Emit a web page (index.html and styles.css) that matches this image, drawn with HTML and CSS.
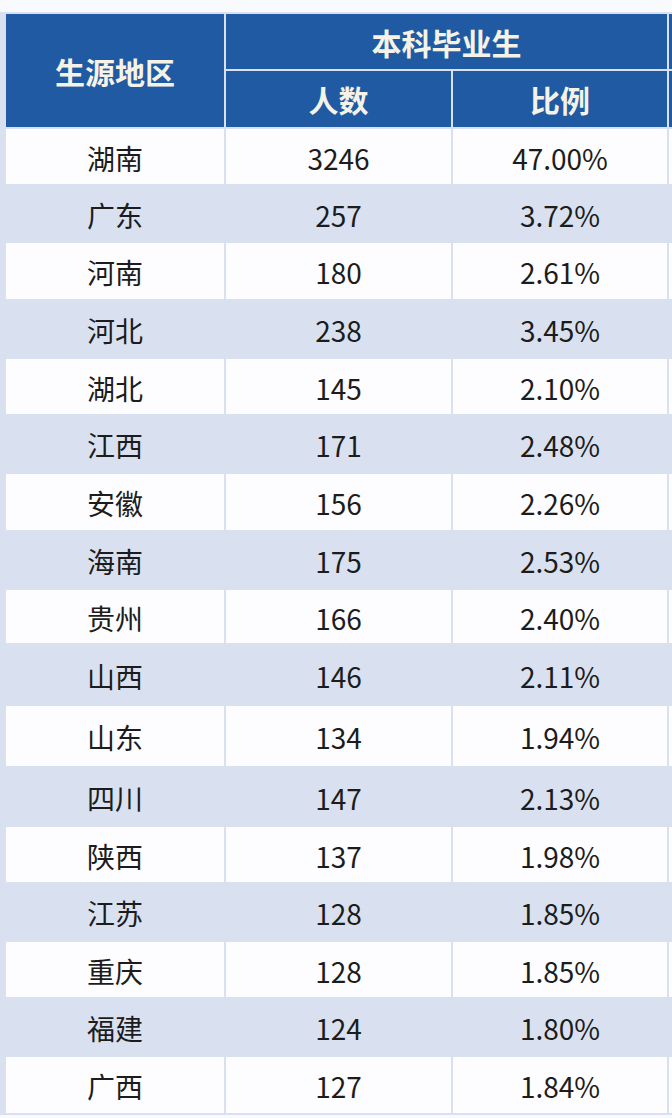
FILE: index.html
```html
<!DOCTYPE html>
<html lang="zh-CN">
<head>
<meta charset="utf-8">
<title>生源地区</title>
<link rel="stylesheet" href="styles.css">
</head>
<body>
<div class="wrap">
  <div class="table">
    <div class="th span-rows">生源地区</div>
    <div class="th span-cols">本科毕业生</div>
    <div class="th"></div>
    <div class="th">人数</div>
    <div class="th">比例</div>
    <div class="th"></div>

    <div class="row"><div>湖南</div><div>3246</div><div>47.00%</div><div></div></div>
    <div class="row alt"><div>广东</div><div>257</div><div>3.72%</div><div></div></div>
    <div class="row"><div>河南</div><div>180</div><div>2.61%</div><div></div></div>
    <div class="row alt"><div>河北</div><div>238</div><div>3.45%</div><div></div></div>
    <div class="row"><div>湖北</div><div>145</div><div>2.10%</div><div></div></div>
    <div class="row alt"><div>江西</div><div>171</div><div>2.48%</div><div></div></div>
    <div class="row"><div>安徽</div><div>156</div><div>2.26%</div><div></div></div>
    <div class="row alt"><div>海南</div><div>175</div><div>2.53%</div><div></div></div>
    <div class="row"><div>贵州</div><div>166</div><div>2.40%</div><div></div></div>
    <div class="row alt"><div>山西</div><div>146</div><div>2.11%</div><div></div></div>
    <div class="row"><div>山东</div><div>134</div><div>1.94%</div><div></div></div>
    <div class="row alt"><div>四川</div><div>147</div><div>2.13%</div><div></div></div>
    <div class="row"><div>陕西</div><div>137</div><div>1.98%</div><div></div></div>
    <div class="row alt"><div>江苏</div><div>128</div><div>1.85%</div><div></div></div>
    <div class="row"><div>重庆</div><div>128</div><div>1.85%</div><div></div></div>
    <div class="row alt"><div>福建</div><div>124</div><div>1.80%</div><div></div></div>
    <div class="row"><div>广西</div><div>127</div><div>1.84%</div><div></div></div>
  </div>
</div>
</body>
</html>
```

FILE: styles.css
```css
html, body {
  margin: 0;
  padding: 0;
  overflow: hidden;
  background: #f9fafd;
}

body {
  width: 672px;
  height: 1118px;
  font-family: "Noto Sans CJK SC", "Noto Sans", sans-serif;
}

.wrap {
  margin-top: 12px;
  padding: 2px 0 2px 6px;
  background: #d9e1f1;
  width: 672px;
  box-sizing: border-box;
  overflow: hidden;
}

.table {
  display: grid;
  grid-template-columns: 218px 225px 214px 200px;
  grid-template-rows: 55px 56px 55px 55px 56px 56px 55px 56px 56px 56px 53px 59px 60px 57px 55px 56px 55px 56px 56px;
  gap: 2px;
}

.th {
  background: #1f5aa2;
  color: #f5f2e8;
  font-weight: 700;
  font-size: 30px;
  display: flex;
  align-items: center;
  justify-content: center;
  line-height: 1;
  overflow: hidden;
}

.span-rows {
  grid-row: span 2;
}

.span-cols {
  grid-column: span 2;
}

.row {
  display: contents;
}

.row > div {
  background: #fdfdff;
  color: #1c1c1c;
  font-size: 28px;
  display: flex;
  align-items: center;
  justify-content: center;
  line-height: 1;
  padding-top: 2px;
}

.row.alt > div {
  background: transparent;
}
```
